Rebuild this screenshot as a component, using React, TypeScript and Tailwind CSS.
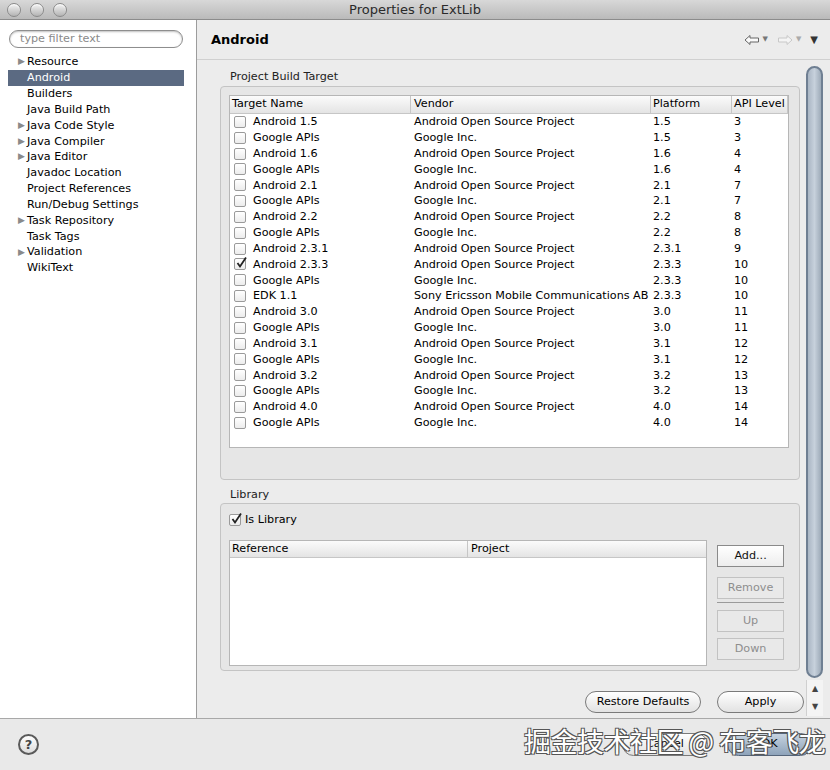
import React from "react";

const rows: [string, string, string, string, boolean][] = [
  ["Android 1.5", "Android Open Source Project", "1.5", "3", false],
  ["Google APIs", "Google Inc.", "1.5", "3", false],
  ["Android 1.6", "Android Open Source Project", "1.6", "4", false],
  ["Google APIs", "Google Inc.", "1.6", "4", false],
  ["Android 2.1", "Android Open Source Project", "2.1", "7", false],
  ["Google APIs", "Google Inc.", "2.1", "7", false],
  ["Android 2.2", "Android Open Source Project", "2.2", "8", false],
  ["Google APIs", "Google Inc.", "2.2", "8", false],
  ["Android 2.3.1", "Android Open Source Project", "2.3.1", "9", false],
  ["Android 2.3.3", "Android Open Source Project", "2.3.3", "10", true],
  ["Google APIs", "Google Inc.", "2.3.3", "10", false],
  ["EDK 1.1", "Sony Ericsson Mobile Communications AB", "2.3.3", "10", false],
  ["Android 3.0", "Android Open Source Project", "3.0", "11", false],
  ["Google APIs", "Google Inc.", "3.0", "11", false],
  ["Android 3.1", "Android Open Source Project", "3.1", "12", false],
  ["Google APIs", "Google Inc.", "3.1", "12", false],
  ["Android 3.2", "Android Open Source Project", "3.2", "13", false],
  ["Google APIs", "Google Inc.", "3.2", "13", false],
  ["Android 4.0", "Android Open Source Project", "4.0", "14", false],
  ["Google APIs", "Google Inc.", "4.0", "14", false],
];

const tree: [string, boolean][] = [
  ["Resource", true],
  ["Android", false],
  ["Builders", false],
  ["Java Build Path", false],
  ["Java Code Style", true],
  ["Java Compiler", true],
  ["Java Editor", true],
  ["Javadoc Location", false],
  ["Project References", false],
  ["Run/Debug Settings", false],
  ["Task Repository", true],
  ["Task Tags", false],
  ["Validation", true],
  ["WikiText", false],
];

function Check({ checked }: { checked: boolean }) {
  return (
    <div className="relative w-[12px] h-[12px] rounded-[2px] border border-[#9a9a9a] bg-gradient-to-b from-white to-[#ececec] shrink-0">
      {checked && (
        <svg className="absolute left-[0px] top-[-3px]" width="13" height="13" viewBox="0 0 13 13">
          <path d="M2.5 7 L5 10.5 L11 1.5" fill="none" stroke="#222" strokeWidth="1.8" />
        </svg>
      )}
    </div>
  );
}

function Light() {
  return (
    <div className="w-[14px] h-[14px] rounded-full border border-[#8a8a8a] bg-gradient-to-b from-[#f4f4f4] to-[#b4b4b4] shadow-[inset_0_1px_1px_rgba(255,255,255,0.9)]" />
  );
}

export default function App() {
  return (
    <div
      className="w-[830px] h-[770px] flex flex-col bg-[#ececec] text-black overflow-hidden relative"
      style={{ fontFamily: '"DejaVu Sans", "Liberation Sans", sans-serif' }}
    >
      {/* Title bar */}
      <div className="h-[20px] flex items-center relative bg-gradient-to-b from-[#d8d8d8] to-[#bababa] border-b border-[#8c8c8c]">
        <div className="flex gap-[9px] pl-[7px]">
          <Light />
          <Light />
          <Light />
        </div>
        <div className="absolute inset-0 flex items-center justify-center text-[13px] text-[#2a2a2a]">
          Properties for ExtLib
        </div>
      </div>

      {/* Middle */}
      <div className="flex h-[698px]">
        {/* Left panel */}
        <div className="w-[197px] bg-white border-r border-[#9c9c9c] flex flex-col pt-[10px]">
          <div className="mx-[9px] w-[174px] h-[18px] rounded-full border border-[#8e8e8e] shadow-[inset_0_1px_2px_rgba(0,0,0,0.25)] flex items-center pl-[10px] text-[11.2px] text-[#8a8a8a]">
            type filter text
          </div>
          <div className="mt-[6px] flex flex-col">
            {tree.map(([name, arrow], i) => {
              const sel = name === "Android";
              return (
                <div
                  key={i}
                  className={
                    "h-[15.85px] flex items-center text-[11.2px] leading-none ml-[8px] mr-[12px] pl-[10px] " +
                    (sel ? "bg-[#5b6a82] text-white" : "")
                  }
                >
                  <span className="w-[9px] shrink-0 text-[#8a8a8a] text-[9px]">
                    {arrow ? "▶" : ""}
                  </span>
                  <span>{name}</span>
                </div>
              );
            })}
          </div>
        </div>

        {/* Right panel */}
        <div className="flex-1 flex flex-col">
          <div className="h-[40px] flex items-center border-b border-[#d0d0d0] pl-[14px] pr-[12px] shrink-0">
            <span className="font-bold text-[13px]">Android</span>
            <div className="ml-auto flex items-center gap-[3px] text-[#444]">
              <svg width="16" height="12" viewBox="0 0 16 12">
                <path d="M1 6 L6 1.5 L6 4 L14.5 4 L14.5 8 L6 8 L6 10.5 Z" fill="#fafafa" stroke="#666" strokeWidth="1" />
              </svg>
              <span className="text-[7px] text-[#777]">▼</span>
              <svg className="ml-[6px]" width="16" height="12" viewBox="0 0 16 12">
                <path d="M15 6 L10 1.5 L10 4 L1.5 4 L1.5 8 L10 8 L10 10.5 Z" fill="#f4f4f4" stroke="#c8c8c8" strokeWidth="1" />
              </svg>
              <span className="text-[7px] text-[#aaa]">▼</span>
              <span className="ml-[6px] text-[10px] text-[#333]">▼</span>
            </div>
          </div>

          <div className="flex flex-1">
            {/* Content */}
            <div className="w-[609px] flex flex-col pl-[23px] pt-[10px]">
              <div className="text-[11.2px] h-[14px] leading-[14px] pl-[10px] text-[#222]">Project Build Target</div>
              <div className="mt-[2px] mr-[6px] h-[394px] rounded-[4px] border border-[#c4c4c4] bg-[#e6e6e6] pt-[8px] pl-[8px] pr-[10px]">
                <div className="h-[353px] bg-white border border-[#b6b6b6] flex flex-col">
                  <div className="h-[18px] flex text-[11.2px] bg-gradient-to-b from-[#fbfbfb] to-[#e4e4e4] border-b border-[#c6c6c6] shrink-0">
                    <div className="w-[181px] pl-[2px] flex items-center border-r border-[#c6c6c6]">Target Name</div>
                    <div className="w-[240px] pl-[3px] flex items-center border-r border-[#c6c6c6]">Vendor</div>
                    <div className="w-[81px] pl-[2px] flex items-center border-r border-[#c6c6c6]">Platform</div>
                    <div className="w-[56px] pl-[2px] flex items-center border-r border-[#c6c6c6]">API Level</div>
                  </div>
                  {rows.map(([n, v, p, a, c], i) => (
                    <div key={i} className="h-[15.84px] flex items-center text-[11.2px] leading-none">
                      <div className="w-[181px] flex items-center pl-[4px] gap-[7px]">
                        <Check checked={c} />
                        <span>{n}</span>
                      </div>
                      <div className="w-[240px] pl-[3px] whitespace-nowrap">{v}</div>
                      <div className="w-[81px] pl-[2px]">{p}</div>
                      <div className="w-[56px] pl-[2px]">{a}</div>
                    </div>
                  ))}
                </div>
              </div>

              <div className="mt-[8px] text-[11.2px] h-[14px] leading-[14px] pl-[10px] text-[#222]">Library</div>
              <div className="mt-[1px] mr-[6px] h-[168px] rounded-[4px] border border-[#c4c4c4] bg-[#e6e6e6] pl-[8px] pr-[15px] pt-[9px]">
                <div className="flex items-center gap-[4px] text-[11.2px] h-[14px]">
                  <Check checked={true} />
                  <span>Is Library</span>
                </div>
                <div className="mt-[13px] flex gap-[10px]">
                  <div className="w-[479px] h-[126px] bg-white border border-[#b6b6b6] flex flex-col">
                    <div className="h-[17px] flex text-[11.2px] bg-gradient-to-b from-[#fbfbfb] to-[#e4e4e4] border-b border-[#c6c6c6] shrink-0">
                      <div className="w-[238px] pl-[2px] flex items-center border-r border-[#c6c6c6]">Reference</div>
                      <div className="flex-1 pl-[3px] flex items-center">Project</div>
                    </div>
                  </div>
                  <div className="w-[67px] flex flex-col pt-[5px]">
                    <div className="h-[22px] border border-[#8a8a8a] bg-gradient-to-b from-white to-[#ededed] flex items-center justify-center text-[11.2px] text-[#111]">Add...</div>
                    <div className="mt-[10px] h-[22px] border border-[#c2c2c2] bg-[#e9e9e9] flex items-center justify-center text-[11.2px] text-[#8e8e8e]">Remove</div>
                    <div className="mt-[3px] h-[1px] bg-[#9a9a9a]" />
                    <div className="mt-[7px] h-[22px] border border-[#c2c2c2] bg-[#e9e9e9] flex items-center justify-center text-[11.2px] text-[#8e8e8e]">Up</div>
                    <div className="mt-[6px] h-[22px] border border-[#c2c2c2] bg-[#e9e9e9] flex items-center justify-center text-[11.2px] text-[#8e8e8e]">Down</div>
                  </div>
                </div>
              </div>

              <div className="mt-[20px] flex justify-end gap-[16px] pr-[2px]">
                <div className="w-[116px] h-[22px] rounded-full border border-[#7a7a7a] bg-gradient-to-b from-white to-[#e2e2e2] flex items-center justify-center text-[11.2px]">Restore Defaults</div>
                <div className="w-[87px] h-[22px] rounded-full border border-[#7a7a7a] bg-gradient-to-b from-white to-[#e2e2e2] flex items-center justify-center text-[11.2px]">Apply</div>
              </div>
            </div>

            {/* Scrollbar */}
            <div className="w-[17px] flex flex-col pt-[6px]">
              <div className="h-[612px] rounded-full border-2 border-[#6f7f92] bg-gradient-to-r from-[#aab6c4] via-[#c7d1dc] to-[#9eabb9]" />
              <div className="mt-[2px] flex flex-col items-center text-[8px] text-[#444] bg-[#f4f4f4] border-l border-[#d0d0d0]">
                <span className="h-[18px] flex items-center">▲</span>
                <span className="h-[18px] flex items-center">▼</span>
              </div>
            </div>
          </div>
        </div>
      </div>

      {/* Bottom bar */}
      <div className="flex-1 border-t border-[#a8a8a8] bg-[#e9e9e9] flex items-center relative">
        <div className="ml-[18px] w-[21px] h-[21px] rounded-full border-2 border-[#5a5a5a] flex items-center justify-center text-[13px] font-bold text-[#444] bg-gradient-to-b from-white to-[#dcdcdc]">?</div>
        <div className="ml-auto mr-[18px] flex gap-[19px]">
          <div className="w-[86px] h-[23px] rounded-full border border-[#7a7a7a] bg-gradient-to-b from-white to-[#e2e2e2] flex items-center justify-center text-[11.2px]">Cancel</div>
          <div className="w-[85px] h-[23px] rounded-full border border-[#55657a] bg-gradient-to-b from-[#c6d3e0] to-[#8ea3ba] flex items-center justify-center text-[11.2px]">OK</div>
        </div>
        <div
          className="absolute left-[524px] top-[2px] text-[27px] text-white tracking-[-0.5px] whitespace-nowrap"
          style={{
            fontFamily: '"Noto Sans CJK SC", sans-serif',
            textShadow: "1px 1px 0 #555, -1px -1px 0 #555, 1px -1px 0 #555, -1px 1px 0 #555",
          }}
        >
          掘金技术社区 @ 布客飞龙
        </div>
      </div>
    </div>
  );
}
